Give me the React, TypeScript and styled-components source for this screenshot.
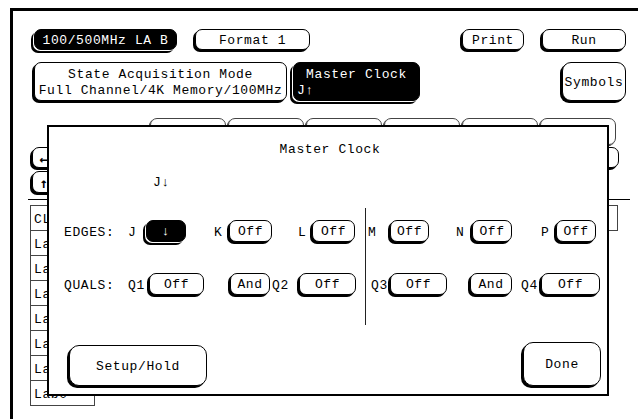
import React from "react";
import styled, { createGlobalStyle } from "styled-components";

const GlobalStyle = createGlobalStyle`
  html, body {
    margin: 0;
    padding: 0;
    background: #fff;
  }
  body {
    font-family: "Liberation Mono", "DejaVu Sans Mono", monospace;
    font-size: 13px;
    color: #000;
  }
`;

const Screen = styled.div`
  position: relative;
  box-sizing: border-box;
  margin: 8px 0 0 10px;
  height: 411px;
  border-top: 3px solid #000;
  border-left: 3px solid #000;
  padding-top: 18px;
  overflow: hidden;
  letter-spacing: 0.6px;
`;

const Row = styled.div<{ $mt?: number; $h?: number }>`
  display: flex;
  align-items: flex-start;
  margin-top: ${(p) => p.$mt ?? 0}px;
  height: ${(p) => (p.$h ? `${p.$h}px` : "auto")};
`;

const Btn = styled.div<{
  $w: number;
  $h: number;
  $ml?: number;
  $dark?: boolean;
  $r?: number;
}>`
  box-sizing: border-box;
  flex-shrink: 0;
  width: ${(p) => p.$w}px;
  height: ${(p) => p.$h}px;
  margin-left: ${(p) => p.$ml ?? 0}px;
  padding-top: 2px;
  border: 1px solid #000;
  border-radius: ${(p) => p.$r ?? 7}px;
  background: ${(p) => (p.$dark ? "#000" : "#fff")};
  color: ${(p) => (p.$dark ? "#fff" : "#000")};
  box-shadow: ${(p) =>
    p.$dark ? "-1px 1px 0 #fff, -3px 3px 0 #000" : "-2px 2px 0 #000"};
  display: flex;
  flex-direction: column;
  align-items: center;
  justify-content: center;
  white-space: pre;
  line-height: 16px;
`;

const LeftLine = styled.div`
  align-self: stretch;
  padding-left: 3px;
`;

const Tabs = styled.div`
  display: flex;
  gap: 2px;
  margin-top: 17px;
  padding-left: 137px;
`;

const Tab = styled.div`
  box-sizing: border-box;
  width: 76px;
  height: 27px;
  border: 1px solid #444;
  border-radius: 7px;
  box-shadow: -1px 1px 0 #000;
`;

const SideRow = styled.div<{ $mt: number }>`
  display: flex;
  justify-content: space-between;
  margin-top: ${(p) => p.$mt}px;
  padding: 0 19px 0 19px;
`;

const ArrowBtn = styled(Btn)`
  font-family: "DejaVu Sans Mono", monospace;
  font-size: 14px;
  font-weight: bold;
`;

const HLine = styled.div`
  margin: 6px 8px 0 15px;
  border-top: 1px solid #000;
`;

const ListArea = styled.div`
  display: flex;
  justify-content: space-between;
  margin-top: 6px;
  padding: 0 20px 0 17px;
`;

const List = styled.div`
  display: flex;
  flex-direction: column;
`;

const ListBox = styled.div<{ $w: number }>`
  box-sizing: border-box;
  width: ${(p) => p.$w}px;
  height: 26px;
  margin-top: -1px;
  border: 1px solid #444;
  padding: 2px 0 0 3px;
  display: flex;
  align-items: center;
`;

const Dialog = styled.div`
  position: absolute;
  left: 34px;
  top: 114px;
  box-sizing: border-box;
  width: 562px;
  height: 271px;
  border: 2px solid #000;
  background: #fff;
  display: flex;
  flex-direction: column;
`;

const Title = styled.div`
  margin-top: 15px;
  text-align: center;
  line-height: 16px;
  padding-left: 4px;
`;

const Current = styled.div`
  margin-top: 17px;
  padding-left: 104px;
  line-height: 16px;
`;

const Columns = styled.div`
  display: flex;
  margin-top: 17px;
  height: 117px;
`;

const Column = styled.div<{ $w?: number; $divider?: boolean }>`
  box-sizing: border-box;
  width: ${(p) => (p.$w ? `${p.$w}px` : "auto")};
  flex: ${(p) => (p.$w ? "none" : "1")};
  border-left: ${(p) => (p.$divider ? "1px solid #222" : "none")};
  padding-top: 12px;
`;

const CtrlRow = styled.div<{ $mt?: number }>`
  display: flex;
  align-items: center;
  height: 22px;
  margin-top: ${(p) => p.$mt ?? 0}px;
`;

const Label = styled.span<{ $w: number; $ml?: number }>`
  flex-shrink: 0;
  width: ${(p) => p.$w}px;
  margin-left: ${(p) => p.$ml ?? 0}px;
  padding-top: 2px;
  white-space: pre;
`;

const BottomRow = styled.div`
  margin-top: auto;
  display: flex;
  justify-content: space-between;
  align-items: flex-end;
  padding: 0 6px 8px 20px;
`;

const labels = ["CL", "La", "La", "La", "La", "La", "La", "Lab0"];

export default function App() {
  return (
    <>
      <GlobalStyle />
      <Screen>
        <Row $h={21}>
          <Btn $w={143} $h={21} $ml={21} $dark>
            100/500MHz LA B
          </Btn>
          <Btn $w={115} $h={21} $ml={18}>
            Format 1
          </Btn>
          <Btn $w={62} $h={21} $ml={152}>
            Print
          </Btn>
          <Btn $w={84} $h={21} $ml={18}>
            Run
          </Btn>
        </Row>
        <Row $mt={12} $h={39}>
          <Btn $w={253} $h={39} $ml={21}>
            <span>State Acquisition Mode</span>
            <span>Full Channel/4K Memory/100MHz</span>
          </Btn>
          <Btn $w={127} $h={39} $ml={6} $dark>
            <span>Master Clock</span>
            <LeftLine>J↑</LeftLine>
          </Btn>
          <Btn $w={64} $h={39} $ml={142} $r={9}>
            Symbols
          </Btn>
        </Row>

        <Tabs>
          {Array.from({ length: 6 }).map((_, i) => (
            <Tab key={i} />
          ))}
        </Tabs>
        <SideRow $mt={2}>
          <ArrowBtn $w={24} $h={21}>
            ←
          </ArrowBtn>
          <Btn $w={60} $h={21} />
        </SideRow>
        <SideRow $mt={3}>
          <ArrowBtn $w={24} $h={22}>
            ↑
          </ArrowBtn>
        </SideRow>
        <HLine />
        <ListArea>
          <List>
            {labels.map((l, i) => (
              <ListBox key={i} $w={65}>
                {l}
              </ListBox>
            ))}
          </List>
          <List>
            <ListBox $w={60} />
          </List>
        </ListArea>

        <Dialog>
          <Title>Master Clock</Title>
          <Current>J↓</Current>
          <Columns>
            <Column $w={316}>
              <CtrlRow>
                <Label $w={64} $ml={15}>
                  EDGES:
                </Label>
                <Label $w={18}>J</Label>
                <Btn $w={40} $h={22} $dark>
                  ↓
                </Btn>
                <Label $w={15} $ml={28}>
                  K
                </Label>
                <Btn $w={43} $h={22}>
                  Off
                </Btn>
                <Label $w={14} $ml={26}>
                  L
                </Label>
                <Btn $w={43} $h={22}>
                  Off
                </Btn>
              </CtrlRow>
              <CtrlRow $mt={31}>
                <Label $w={64} $ml={15}>
                  QUALS:
                </Label>
                <Label $w={21}>Q1</Label>
                <Btn $w={55} $h={22}>
                  Off
                </Btn>
                <Btn $w={40} $h={22} $ml={26}>
                  And
                </Btn>
                <Label $w={27} $ml={2}>
                  Q2
                </Label>
                <Btn $w={57} $h={22}>
                  Off
                </Btn>
              </CtrlRow>
            </Column>
            <Column $divider>
              <CtrlRow>
                <Label $w={22} $ml={2}>
                  M
                </Label>
                <Btn $w={39} $h={22}>
                  Off
                </Btn>
                <Label $w={16} $ml={27}>
                  N
                </Label>
                <Btn $w={40} $h={22}>
                  Off
                </Btn>
                <Label $w={15} $ml={29}>
                  P
                </Label>
                <Btn $w={40} $h={22}>
                  Off
                </Btn>
              </CtrlRow>
              <CtrlRow $mt={31}>
                <Label $w={19} $ml={5}>
                  Q3
                </Label>
                <Btn $w={57} $h={22}>
                  Off
                </Btn>
                <Btn $w={42} $h={22} $ml={23}>
                  And
                </Btn>
                <Label $w={20} $ml={9}>
                  Q4
                </Label>
                <Btn $w={59} $h={22}>
                  Off
                </Btn>
              </CtrlRow>
            </Column>
          </Columns>
          <BottomRow>
            <Btn $w={138} $h={41} $r={10}>
              Setup/Hold
            </Btn>
            <Btn $w={78} $h={44} $r={10}>
              Done
            </Btn>
          </BottomRow>
        </Dialog>
      </Screen>
    </>
  );
}
